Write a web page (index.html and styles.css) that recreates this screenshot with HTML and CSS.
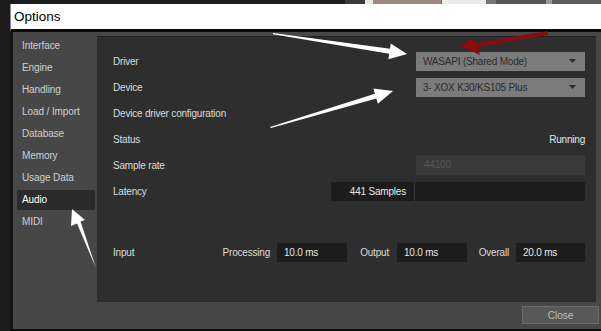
FILE: index.html
```html
<!DOCTYPE html>
<html>
<head>
<meta charset="utf-8">
<link rel="stylesheet" href="styles.css">
</head>
<body>
<div class="topstrip">
  <span class="ts ts-a"></span>
  <span class="ts ts-b"></span>
  <span class="ts ts-c"></span>
  <span class="ts ts-d"></span>
  <span class="ts ts-e"></span>
  <span class="ts ts-f"></span>
  <span class="ts ts-g"></span>
  <span class="ts ts-h"></span>
  <span class="ts ts-i"></span>
</div>
<div class="window">
  <div class="titlebar">Options</div>
  <div class="main">
    <div class="content">
      <ul class="sidebar">
        <li class="nav">Interface</li>
        <li class="nav">Engine</li>
        <li class="nav">Handling</li>
        <li class="nav">Load / Import</li>
        <li class="nav">Database</li>
        <li class="nav">Memory</li>
        <li class="nav">Usage Data</li>
        <li class="nav nav-active">Audio</li>
        <li class="nav">MIDI</li>
      </ul>
      <div class="panel">
        <div class="row">
          <span class="label">Driver</span>
          <div class="dropdown"><span>WASAPI (Shared Mode)</span><svg class="caret" width="7" height="4" viewBox="0 0 7 4"><polygon points="0,0 7,0 3.5,4" fill="#2a2a2a"/></svg></div>
        </div>
        <div class="row">
          <span class="label">Device</span>
          <div class="dropdown"><span>3- XOX K30/KS105 Plus</span><svg class="caret" width="7" height="4" viewBox="0 0 7 4"><polygon points="0,0 7,0 3.5,4" fill="#2a2a2a"/></svg></div>
        </div>
        <div class="row">
          <span class="label">Device driver configuration</span>
        </div>
        <div class="row">
          <span class="label">Status</span>
          <span class="value">Running</span>
        </div>
        <div class="row">
          <span class="label">Sample rate</span>
          <div class="disabled">44100</div>
        </div>
        <div class="row">
          <span class="label">Latency</span>
          <div class="latency">
            <span class="lat-val">441 Samples</span>
            <span class="lat-slider"></span>
          </div>
        </div>
        <div class="row row-input">
          <span class="label">Input</span>
          <span class="sublabel sub-proc">Processing</span>
          <span class="field">10.0 ms</span>
          <span class="sublabel sub-out">Output</span>
          <span class="field">10.0 ms</span>
          <span class="sublabel sub-all">Overall</span>
          <span class="field field-last">20.0 ms</span>
        </div>
      </div>
    </div>
    <div class="footer">
      <button class="close">Close</button>
    </div>
  </div>
</div>
<svg class="annot" width="601" height="331" viewBox="0 0 601 331">
  <polygon fill="#ffffff" points="273,33 390,48.8 390.8,43.4 407,54 388.4,59.2 389.2,53.8 273,34.2"/>
  <polygon fill="#ffffff" points="270,127 374.9,93.7 373.4,88.4 393,91 377.9,103.8 376.3,98.5 271,128"/>
  <polygon fill="#ffffff" points="72,209 85,220 80.5,221.5 96,268 77,223.5 71,226"/>
  <polygon fill="#8a0d0d" points="548,31 548,35 478,47 480,55 460,46 471,39 477,43"/>
</svg>
</body>
</html>
```
FILE: styles.css
```css
* { box-sizing: border-box; }
html, body {
  margin: 0;
  padding: 0;
}
body {
  width: 601px;
  height: 331px;
  overflow: hidden;
  background: #1c1c1c;
  font-family: "Liberation Sans", Arial, sans-serif;
  position: relative;
}
.topstrip {
  height: 4px;
  display: flex;
}
.ts { display: block; height: 4px; }
.ts-a { width: 345px; background: #1c1c1c; }
.ts-b { width: 20px; background: #3a3a3a; }
.ts-c { width: 8px; background: #e8e8e8; }
.ts-d { width: 68px; background: #9a8a80; }
.ts-e { width: 46px; background: #ececec; border-left: 1px solid #666; border-right: 1px solid #666; }
.ts-f { width: 9px; background: #777; }
.ts-g { width: 50px; background: #555; }
.ts-h { width: 6px; background: #9a9a9a; }
.ts-i { flex: 1; background: #5a5a5a; }

.window {
  margin-left: 10px;
}
.titlebar {
  height: 28px;
  background: #ffffff;
  border-left: 1px solid #8a8a8a;
  border-bottom: 3px solid #0a0a0a;
  padding-left: 3px;
  font-family: "Liberation Sans", Arial, sans-serif;
  font-size: 13.5px;
  line-height: 25px;
  color: #000;
}
.main {
  height: 299px;
  background: #474747;
  border-left: 3px solid #151515;
  border-bottom: 2px solid #0c0c0c;
  display: flex;
  flex-direction: column;
}
.content {
  display: flex;
  margin-top: 4px;
  padding-left: 4px;
  gap: 2px;
  height: 266px;
}
.sidebar {
  list-style: none;
  margin: 0;
  padding: 0;
  width: 78px;
  display: flex;
  flex-direction: column;
  gap: 2px;
}
.nav {
  height: 20px;
  line-height: 20px;
  padding-left: 5px;
  font-size: 10px;
  letter-spacing: -0.1px;
  color: #cfcfcf;
}
.nav-active {
  background: #2b2b2b;
  color: #ffffff;
}
.panel {
  width: 499px;
  height: 266px;
  background: #2e2e2e;
  border-top: 1px solid #222;
  padding: 14px 11px 0 16px;
  display: flex;
  flex-direction: column;
  gap: 6px;
}
.row {
  height: 20px;
  display: flex;
  align-items: center;
  font-size: 10px;
  letter-spacing: -0.2px;
  color: #dcdcdc;
}
.label { flex: 1; }
.value { color: #e6e6e6; }
.dropdown {
  width: 169px;
  height: 19px;
  background: #7b7b7b;
  color: #2a2a2a;
  display: flex;
  align-items: center;
  justify-content: space-between;
  padding: 0 9px 0 7px;
}
.caret { display: block; }
.disabled {
  width: 169px;
  height: 20px;
  background: #3a3a3a;
  color: #585858;
  line-height: 20px;
  padding-left: 8px;
}
.latency {
  width: 254px;
  height: 19px;
  background: #1c1c1c;
  display: flex;
}
.lat-val {
  width: 84px;
  border-right: 1px solid #3a3a3a;
  text-align: right;
  padding-right: 8px;
  line-height: 19px;
  color: #e6e6e6;
}
.lat-slider { flex: 1; }
.row-input {
  margin-top: 35px;
}
.sublabel {
  text-align: right;
  color: #dcdcdc;
}
.sub-proc { padding-right: 7px; }
.sub-out { width: 50px; padding-right: 8px; }
.sub-all { width: 49px; padding-right: 7px; }
.field {
  width: 70px;
  height: 19px;
  line-height: 19px;
  background: #1c1c1c;
  color: #e6e6e6;
  padding-left: 7px;
}
.field-last { width: 69px; }
.footer {
  display: flex;
  justify-content: flex-end;
  padding-right: 2px;
  padding-top: 4px;
}
.close {
  width: 77px;
  height: 18px;
  background: #585858;
  border: 1px solid #6c6c6c;
  color: #bdbdbd;
  font-family: "Liberation Sans", Arial, sans-serif;
  font-size: 10px;
  padding: 0;
}
.annot {
  position: absolute;
  left: 0;
  top: 0;
  pointer-events: none;
}
```
